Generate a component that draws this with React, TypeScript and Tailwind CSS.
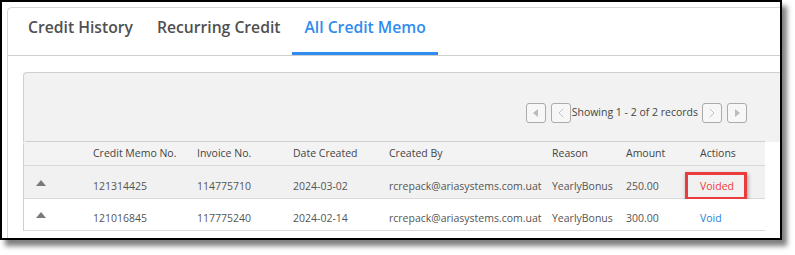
import { ChevronLeft, ChevronRight } from "lucide-react";

type Row = {
  memo: string;
  invoice: string;
  date: string;
  by: string;
  reason: string;
  amount: string;
  action: string;
};

const rows: Row[] = [
  {
    memo: "121314425",
    invoice: "114775710",
    date: "2024-03-02",
    by: "rcrepack@ariasystems.com.uat",
    reason: "YearlyBonus",
    amount: "250.00",
    action: "Voided",
  },
  {
    memo: "121016845",
    invoice: "117775240",
    date: "2024-02-14",
    by: "rcrepack@ariasystems.com.uat",
    reason: "YearlyBonus",
    amount: "300.00",
    action: "Void",
  },
];

const cols = "grid grid-cols-[69px_104px_96px_96px_163px_74px_74px_1fr]";

function PageButton({ children }: { children: React.ReactNode }) {
  return (
    <button className="w-[20px] h-[20px] flex items-center justify-center border border-[#ababab] rounded-[3px] bg-[#f7f7f7]">
      {children}
    </button>
  );
}

function Tab({ label, active }: { label: string; active?: boolean }) {
  return (
    <div
      className={
        active
          ? "px-3 h-full flex items-center border-b-[3px] border-[#2f8cf0] text-[#2f8cf0] -mb-px pb-[4px]"
          : "px-3 h-full flex items-center text-[#505050] pb-[7px]"
      }
    >
      {label}
    </div>
  );
}

export default function App() {
  return (
    <div className="w-[795px] h-[255px] bg-white font-['Open_Sans',sans-serif]">
      <div className="w-[782px] h-[240px] border-2 border-black bg-white shadow-[5px_6px_5px_rgba(0,0,0,0.5)] overflow-hidden pl-[5px] pt-[5px]">
        <div className="w-[800px] h-[260px] border-l border-t border-[#d6d6d6] rounded-tl-[5px]">
          <div className="h-[48px] border-b border-[#cfcfcf] flex pl-[8px] text-[15.7px] font-semibold">
            <Tab label="Credit History" />
            <Tab label="Recurring Credit" />
            <Tab label="All Credit Memo" active />
          </div>

          <div className="pl-[15px] pt-[16px]">
            <div className="w-[780px] h-[70px] border-l border-t border-[#cfcfcf] rounded-tl-[4px] bg-[#f2f2f2]">
              <div className="w-[742px] flex items-center justify-end gap-[5px] pt-[30px] pr-[19px] text-[10.5px] text-[#444]">
                <PageButton>
                  <svg width="6" height="8" viewBox="0 0 6 8">
                    <path d="M5 0 L0 4 L5 8 Z" fill="#bcbcbc" />
                  </svg>
                </PageButton>
                <PageButton>
                  <ChevronLeft size={16} strokeWidth={1.2} color="#b8b8b8" />
                </PageButton>
                <span className="-ml-[4px] mr-[-1px]">Showing 1 - 2 of 2 records</span>
                <PageButton>
                  <ChevronRight size={16} strokeWidth={1.2} color="#b8b8b8" />
                </PageButton>
                <PageButton>
                  <svg width="6" height="8" viewBox="0 0 6 8">
                    <path d="M1 0 L6 4 L1 8 Z" fill="#bcbcbc" />
                  </svg>
                </PageButton>
              </div>
            </div>

            <div className="w-[742px] -mt-px border-l border-t border-[#cfcfcf] rounded-tl-[4px] text-[10.5px]">
              <div className={`${cols} h-[24px] items-center bg-[#f3f3f3] border-b border-[#d9d9d9] font-medium text-[#444]`}>
                <div />
                <div>Credit Memo No.</div>
                <div>Invoice No.</div>
                <div>Date Created</div>
                <div>Created By</div>
                <div>Reason</div>
                <div>Amount</div>
                <div>Actions</div>
              </div>
              {rows.map((r, i) => (
                <div
                  key={r.memo}
                  className={`${cols} relative ${i === 0 ? "h-[33px] bg-[#f1f1f1]" : "h-[32px] bg-white"} items-center pt-[9px] border-b border-[#d9d9d9] text-[#555]`}
                >
                  <div className="pl-[12px] pb-[8px] flex">
                    <svg width="10" height="6" viewBox="0 0 10 6">
                      <path d="M0 6 L5 0 L10 6 Z" fill="#7a7a7a" />
                    </svg>
                  </div>
                  <div>{r.memo}</div>
                  <div>{r.invoice}</div>
                  <div>{r.date}</div>
                  <div>{r.by}</div>
                  <div>{r.reason}</div>
                  <div>{r.amount}</div>
                  <div>
                    {r.action === "Voided" ? (
                      <span className="text-[#f03a3a]">{r.action}</span>
                    ) : (
                      <span className="text-[#2a7fd6]">{r.action}</span>
                    )}
                  </div>
                  {r.action === "Voided" && (
                    <div className="absolute left-[661px] top-[6px] w-[62px] h-[28px] border-[3px] border-[#ea3c3c] shadow-[1px_2px_4px_rgba(0,0,0,0.35)]" />
                  )}
                </div>
              ))}
            </div>
          </div>
        </div>
      </div>
    </div>
  );
}
